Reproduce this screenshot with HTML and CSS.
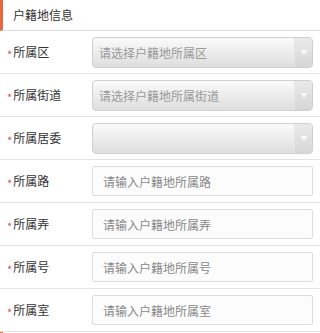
FILE: index.html
```html
<!DOCTYPE html>
<html lang="zh-CN">
<head>
    <meta charset="UTF-8">
    <meta name="viewport" content="width=device-width, initial-scale=1.0">
    <title>户籍地信息</title>
    <link rel="stylesheet" href="styles.css">
</head>
<body>

    <!-- 户籍地信息 -->
    <div class="section-title">户籍地信息</div>

    <div class="form-row">
        <label class="form-label"><span class="req">*</span>所属区</label>
        <div class="select-box">
            <span class="select-text">请选择户籍地所属区</span>
            <span class="select-arrow"></span>
        </div>
    </div>

    <div class="form-row">
        <label class="form-label"><span class="req">*</span>所属街道</label>
        <div class="select-box">
            <span class="select-text">请选择户籍地所属街道</span>
            <span class="select-arrow"></span>
        </div>
    </div>

    <div class="form-row">
        <label class="form-label"><span class="req">*</span>所属居委</label>
        <div class="select-box">
            <span class="select-text"></span>
            <span class="select-arrow"></span>
        </div>
    </div>

    <div class="form-row">
        <label class="form-label"><span class="req">*</span>所属路</label>
        <input class="text-input" type="text" placeholder="请输入户籍地所属路">
    </div>

    <div class="form-row">
        <label class="form-label"><span class="req">*</span>所属弄</label>
        <input class="text-input" type="text" placeholder="请输入户籍地所属弄">
    </div>

    <div class="form-row">
        <label class="form-label"><span class="req">*</span>所属号</label>
        <input class="text-input" type="text" placeholder="请输入户籍地所属号">
    </div>

    <div class="form-row">
        <label class="form-label"><span class="req">*</span>所属室</label>
        <input class="text-input" type="text" placeholder="请输入户籍地所属室">
    </div>

    <div class="section-title"></div>

</body>
</html>
```

FILE: styles.css
```css
* {
    margin: 0;
    padding: 0;
    box-sizing: border-box;
}
body {
    font-family: "Noto Sans CJK SC", "Noto Sans", sans-serif;
    background: #fff;
    color: #333;
}
/* 标题栏 */
.section-title {
    height: 31px;
    line-height: 30px;
    padding-left: 13px;
    font-size: 12px;
    color: #333;
    border-left: 3px solid #f0663c;
    border-bottom: 1px solid #ddd;
    padding-left: 10px;
}
.form-row {
    display: flex;
    align-items: center;
    height: 43px;
    padding: 0 7px 0 7px;
    border-bottom: 1px solid #e3e3e3;
}
.form-label {
    width: 85px;
    flex-shrink: 0;
    font-size: 12px;
    color: #333;
}
.req {
    color: #d9534f;
    font-size: 11px;
    margin-right: 1px;
    vertical-align: -2px;
}
/* 下拉框 */
.select-box {
    flex: 1;
    height: 31px;
    display: flex;
    border: 1px solid #d0d0d0;
    border-radius: 4px;
    background: linear-gradient(#fafafa, #dedede);
    overflow: hidden;
}
.select-text {
    flex: 1;
    padding-left: 6px;
    line-height: 29px;
    font-size: 12px;
    color: #999;
}
.select-arrow {
    width: 18px;
    position: relative;
    background: linear-gradient(#eaeaea, #d6d6d6);
    border-left: 1px solid #e6e6e6;
}
.select-arrow::after {
    content: "";
    position: absolute;
    left: 5px;
    top: 12px;
    border-left: 4px solid transparent;
    border-right: 4px solid transparent;
    border-top: 5px solid #f8f8f8;
}
/* 输入框 */
.text-input {
    flex: 1;
    height: 30px;
    padding-left: 10px;
    border: 1px solid #ddd;
    border-radius: 2px;
    background: #fcfcfc;
    font-family: inherit;
    font-size: 12px;
    color: #333;
    outline: none;
}
.text-input::placeholder {
    color: #888;
}
```
